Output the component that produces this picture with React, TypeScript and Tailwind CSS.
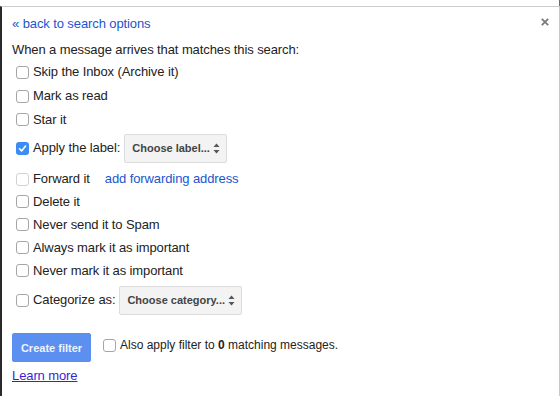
import React from "react";

function Box({ checked = false, disabled = false }: { checked?: boolean; disabled?: boolean }) {
  if (checked) {
    return (
      <span className="flex h-[13px] w-[13px] shrink-0 items-center justify-center rounded-[3px] bg-[#3c8cf3]">
        <svg width="9" height="9" viewBox="0 0 9 9">
          <path d="M1.5 4.8 L3.6 6.9 L7.6 2" fill="none" stroke="#fff" strokeWidth="1.6" strokeLinecap="round" strokeLinejoin="round" />
        </svg>
      </span>
    );
  }
  return (
    <span
      className={
        "block h-[13px] w-[13px] shrink-0 rounded-[3px] border bg-white " +
        (disabled ? "border-[#d2d2d2]" : "border-[#a6a6a6]")
      }
    />
  );
}

function Row({ label, h, checked, disabled, children }: { label: string; h: string; checked?: boolean; disabled?: boolean; children?: React.ReactNode }) {
  return (
    <div className={"flex items-center pl-[4px] " + h}>
      <Box checked={checked} disabled={disabled} />
      <span className="ml-[4px] whitespace-nowrap">{label}</span>
      {children}
    </div>
  );
}

function Arrows() {
  return (
    <svg width="7" height="11" viewBox="0 0 7 11" className="ml-auto">
      <path d="M3.5 0.5 L6.5 4 L0.5 4 Z" fill="#555" />
      <path d="M3.5 10.5 L6.5 7 L0.5 7 Z" fill="#555" />
    </svg>
  );
}

function Select({ text, w }: { text: string; w: string }) {
  return (
    <div className={"flex h-[29px] items-center rounded-[2px] border border-[#dcdcdc] bg-[#f3f3f3] pl-[7px] pr-[6px] text-[11px] font-bold tracking-normal text-[#444] " + w}>
      <span className="whitespace-nowrap">{text}</span>
      <Arrows />
    </div>
  );
}

export default function App() {
  return (
    <div
      className="relative h-[396px] w-[560px] overflow-hidden bg-white text-[13px] leading-[16px] tracking-[-0.1px] text-[#222]"
      style={{ fontFamily: '"Liberation Sans", Arial, sans-serif' }}
    >
      <div className="flex h-[6px] justify-end">
        <div className="h-[6px] w-[1px] bg-[#3b6fd8]" />
      </div>
      <div className="relative h-[390px] border-l-2 border-r border-t border-l-[#2a2a2a] border-r-[#c8c8c8] border-t-[#cccccc] pl-[10px]">
        <div className="flex items-start justify-between pt-[9px]">
          <a className="cursor-pointer text-[#1a55d0]">« back to search options</a>
          <svg width="8" height="8" viewBox="0 0 8 8" className="mr-[10px] mt-[2px]">
            <path d="M0.8 0.8 L7.2 7.2 M7.2 0.8 L0.8 7.2" stroke="#7a7a7a" strokeWidth="1.8" />
          </svg>
        </div>
        <div className="mt-[10px]">When a message arrives that matches this search:</div>
        <div className="mt-[2px]">
          <Row label="Skip the Inbox (Archive it)" h="h-[24px]" />
          <Row label="Mark as read" h="h-[24px]" />
          <Row label="Star it" h="h-[23px]" />
          <Row label="Apply the label:" h="h-[34px]" checked>
            <div className="ml-[4px]">
              <Select text="Choose label..." w="w-[103px]" />
            </div>
          </Row>
          <Row label="Forward it" h="h-[25px] pt-[3px]" disabled>
            <a className="ml-[15px] cursor-pointer whitespace-nowrap text-[#1a55d0]">add forwarding address</a>
          </Row>
          <Row label="Delete it" h="h-[23px]" />
          <Row label="Never send it to Spam" h="h-[23px]" />
          <Row label="Always mark it as important" h="h-[23px]" />
          <Row label="Never mark it as important" h="h-[23px]" />
          <Row label="Categorize as:" h="h-[36px]">
            <div className="ml-[4px]">
              <Select text="Choose category..." w="w-[123px]" />
            </div>
          </Row>
        </div>
        <div className="mt-[15px] flex items-start">
          <button className="flex h-[29px] w-[79px] items-center justify-center rounded-[2px] border border-[#5a8ff0] bg-[#5b90f1] text-[11px] font-bold tracking-normal text-[#eef3fe]">
            Create filter
          </button>
          <div className="ml-[12px] mt-[4px] flex items-center text-[12px] tracking-normal">
            <Box />
            <span className="ml-[4px] whitespace-nowrap">
              Also apply filter to <b>0</b> matching messages.
            </span>
          </div>
        </div>
        <div className="mt-[6px]">
          <a className="cursor-pointer text-[#3a1fd4] underline">Learn more</a>
        </div>
      </div>
    </div>
  );
}
